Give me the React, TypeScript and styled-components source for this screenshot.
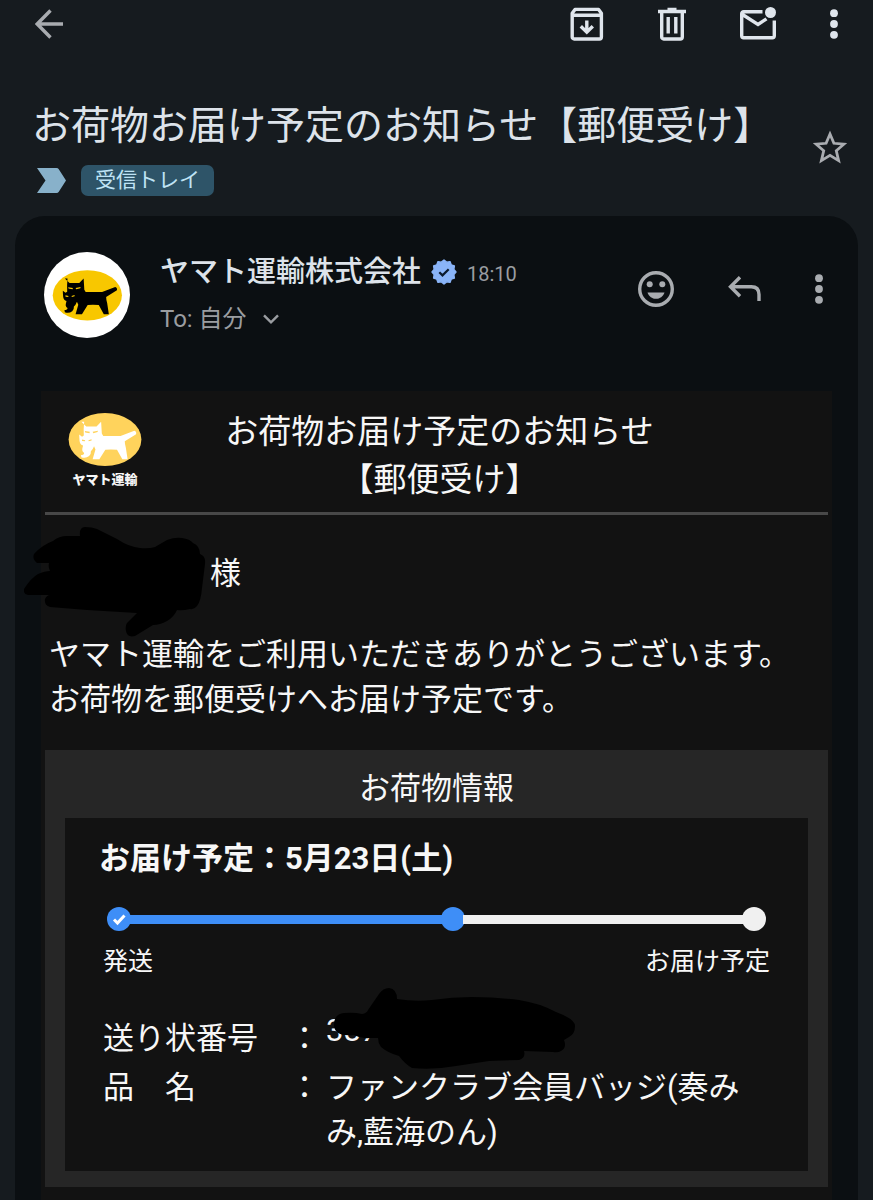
import React, { FC } from 'react'
import styled, { createGlobalStyle } from 'styled-components'

const GlobalStyle = createGlobalStyle`
	* {
		box-sizing: border-box;
	}
	body {
		margin: 0;
		background-color: #161b1f;
		font-family: Roboto, 'Noto Sans CJK JP', sans-serif;
	}
	h1, h2, h3, p {
		margin: 0;
		font-weight: 400;
	}
	svg {
		display: block;
	}
`

const Page = styled.div`
	display: flex;
	flex-direction: column;
	min-height: 100vh;
`

const Toolbar = styled.header`
	display: flex;
	align-items: center;
	justify-content: space-between;
	height: 48px;
	padding: 0 35px;
`

const Actions = styled.div<{ $height: number }>`
	display: flex;
	align-items: center;
	gap: 54px;
	height: ${({ $height }) => $height}px;
`

const IconButton = styled.button<{ $muted?: boolean }>`
	flex: none;
	padding: 0;
	border: 0;
	background: none;
	color: ${({ $muted }) => ($muted ? '#a9acb0' : '#dfe5ec')};
	cursor: pointer;
`

const SubjectRow = styled.section`
	display: flex;
	align-items: center;
	justify-content: space-between;
	padding: 50px 26px 20px 32px;
`

const Subject = styled.h1`
	font-size: 39px;
	line-height: 56px;
	color: #dde3ea;
`

const Labels = styled.div`
	display: flex;
	align-items: center;
	gap: 15px;
	margin-top: 11px;
	padding-left: 5px;
`

const Chip = styled.span`
	padding: 0 14px;
	border-radius: 7px;
	background-color: #2e5468;
	font-size: 21px;
	line-height: 31px;
	color: #bfe3f5;
`

const Card = styled.main`
	display: flex;
	flex: 1;
	flex-direction: column;
	margin: 0 15px;
	padding: 36px 26px 0;
	border-radius: 30px 30px 0 0;
	background-color: #0b0f12;
`

const SenderRow = styled.div`
	display: flex;
	align-items: flex-start;
	margin-bottom: 53px;
	padding: 0 9px 0 3px;
`

const SenderInfo = styled.div`
	flex: 1;
	margin-left: 30px;
`

const SenderLine = styled.div`
	display: flex;
	align-items: center;
	gap: 10px;
	height: 40px;
	margin-bottom: 9px;
`

const Sender = styled.h2`
	font-size: 29px;
	font-weight: 500;
	line-height: 40px;
	color: #dde3ea;
`

const Time = styled.time`
	padding-top: 4px;
	font-size: 20px;
	color: #9a9da1;
`

const Recipient = styled.button`
	display: flex;
	align-items: center;
	gap: 16px;
	padding: 0;
	border: 0;
	background: none;
	font-family: inherit;
	font-size: 24px;
	line-height: 36px;
	color: #9a9da1;
	cursor: pointer;
`

const Mail = styled.article`
	flex: 1;
	padding: 0 4px 10px;
	background-color: #121212;
	color: #f7f7f7;
`

const MailHeader = styled.header`
	display: grid;
	grid-template-columns: 104px 1fr 98px;
	align-items: center;
	padding: 17px 0 8px;
	border-bottom: 3px solid #484848;
`

const Brand = styled.div`
	justify-self: start;
	display: flex;
	flex-direction: column;
	align-items: center;
	padding: 0 0 5px 23px;
	font-size: 13px;
	font-weight: 900;
	line-height: 28px;
`

const MailTitle = styled.h2`
	font-size: 33px;
	line-height: 48px;
	text-align: center;
`

const Addressee = styled.p`
	position: relative;
	padding: 37px 0 0 165px;
	font-size: 31px;
	line-height: 44px;
`

const NameMask = styled.svg`
	position: absolute;
	top: 12px;
	left: -21px;
`

const Message = styled.p`
	padding: 36px 4px 28px;
	font-size: 31px;
	line-height: 45px;
`

const Parcel = styled.section`
	padding: 0 20px 16px;
	background-color: #262626;
`

const ParcelTitle = styled.h3`
	padding: 17px 0 7px;
	font-size: 31px;
	line-height: 44px;
	text-align: center;
`

const ParcelBody = styled.div`
	padding: 19px 34px 16px;
	background-color: #121212;
`

const Schedule = styled.p`
	font-size: 31px;
	font-weight: 700;
	line-height: 44px;
`

const Track = styled.div`
	display: flex;
	align-items: center;
	margin: 26px 8px 0;
`

const Stop = styled.span<{ $done?: boolean }>`
	flex: none;
	width: 24px;
	height: 24px;
	border-radius: 50%;
	background-color: ${({ $done }) => ($done ? '#3e8ef7' : '#f0f0f0')};
`

const Segment = styled.span<{ $done?: boolean; $share: number }>`
	flex: ${({ $share }) => $share};
	height: 9px;
	margin: 0 -2px;
	background-color: ${({ $done }) => ($done ? '#3e8ef7' : '#f0f0f0')};
`

const TrackLabels = styled.div`
	display: flex;
	justify-content: space-between;
	margin: 13px 4px 36px;
	font-size: 25px;
	line-height: 36px;
`

const Details = styled.table`
	width: 100%;
	border-collapse: collapse;
	font-size: 31px;
	line-height: 45px;

	th,
	td {
		padding: 0;
		font-weight: 400;
		text-align: left;
		vertical-align: top;
	}
	th {
		width: 190px;
		padding-left: 4px;
	}
	tr:first-child > * {
		height: 49px;
	}
`

const Colon = styled.td`
	width: 37px;
`

const NumberCell = styled.td`
	position: relative;

	&& {
		line-height: 30px;
	}
`

const NumberMask = styled.svg`
	position: absolute;
	top: -28px;
	left: 4px;
`

const BackIcon: FC = () => (
	<svg width='29' height='30' viewBox='0 0 29 30' fill='none' stroke='currentColor' strokeWidth='3.4'>
		<path d='M28 15H3M15.5 1.5 2.2 15l13.3 13.5' />
	</svg>
)

const ArchiveIcon: FC = () => (
	<svg width='34' height='34' viewBox='0 0 34 34' fill='none' stroke='currentColor' strokeWidth='3.4'>
		<path d='M2.2 6.2 5 2.4h23.6l2.8 3.8V30a2 2 0 0 1-2 2H4.2a2 2 0 0 1-2-2ZM2.2 8.2h29.2' strokeLinejoin='round' />
		<path d='M16.8 13.5v11.5M10.8 19.2l6 6 6-6' />
	</svg>
)

const TrashIcon: FC = () => (
	<svg width='28' height='34' viewBox='0 0 28 34' fill='none' stroke='currentColor' strokeWidth='3.4'>
		<path d='M0 4.5h28M9.5 2.4h9M3.7 4.5V30a2 2 0 0 0 2 2h16.6a2 2 0 0 0 2-2V4.5M10.2 10v16.5M17.8 10v16.5' />
	</svg>
)

const UnreadIcon: FC = () => (
	<svg width='36' height='34' viewBox='0 0 36 34' fill='none' stroke='currentColor' strokeWidth='3.4'>
		<path d='M22.5 4.7H3.7a2 2 0 0 0-2 2v22a2 2 0 0 0 2 2h28.6a2 2 0 0 0 2-2V13.5M2.5 7.5 18 17.5l8.5-5.7' />
		<circle cx='30.5' cy='5.5' r='5.5' fill='currentColor' stroke='none' />
	</svg>
)

const MoreIcon: FC = () => (
	<svg width='8' height='30' viewBox='0 0 8 30' fill='currentColor'>
		<circle cx='4' cy='4.2' r='3.9' />
		<circle cx='4' cy='15' r='3.9' />
		<circle cx='4' cy='25.8' r='3.9' />
	</svg>
)

const StarIcon: FC = () => (
	<svg width='34' height='34' viewBox='0 0 34 34' fill='none' stroke='currentColor' strokeWidth='2.8'>
		<path d='m17 4 3.9 9.3 10 .9-7.6 6.6 2.3 9.8L17 25.4l-8.6 5.2 2.3-9.8-7.6-6.6 10-.9Z' />
	</svg>
)

const ImportantIcon: FC = () => (
	<svg width='29' height='25' viewBox='0 0 29 25' fill='#88b1ca'>
		<path d='M0 0h19.5q1.5 0 2.3 1.2L29 12.5l-7.2 11.3Q21 25 19.5 25H0l8.5-12.5Z' />
	</svg>
)

// twelve-pointed badge
const badgePoints = Array.from({ length: 24 }, (_, i) => {
	const radius = i % 2 ? 10.2 : 12
	const angle = (i * Math.PI) / 12
	return `${13 + radius * Math.sin(angle)},${13 - radius * Math.cos(angle)}`
}).join(' ')

const VerifiedIcon: FC = () => (
	<svg width='26' height='26' viewBox='0 0 26 26'>
		<polygon points={badgePoints} fill='#8ab4f8' stroke='#8ab4f8' strokeWidth='1.4' strokeLinejoin='round' />
		<path d='m8.3 13.2 3.2 3.2 6.2-6.2' fill='none' stroke='#0b1a2e' strokeWidth='2.2' />
	</svg>
)

const ChevronIcon: FC = () => (
	<svg width='16' height='10' viewBox='0 0 16 10' fill='none' stroke='currentColor' strokeWidth='2.4'>
		<path d='m1 1.3 7 7 7-7' />
	</svg>
)

const SmileIcon: FC = () => (
	<svg width='36' height='36' viewBox='0 0 36 36' fill='currentColor'>
		<circle cx='18' cy='18' r='16.3' fill='none' stroke='currentColor' strokeWidth='3.4' />
		<circle cx='11.7' cy='13.2' r='3' />
		<circle cx='24.3' cy='13.2' r='3' />
		<path d='M9.5 21.5h17c-1.5 4-4.5 6.3-8.5 6.3s-7-2.3-8.5-6.3Z' />
	</svg>
)

const ReplyIcon: FC = () => (
	<svg width='33' height='26' viewBox='0 0 33 26' fill='none' stroke='currentColor' strokeWidth='3.4'>
		<path d='M12 1.3 2.5 10.8l9.5 9.5M2.5 10.8h20.8q7.7 0 7.7 7.7V25' />
	</svg>
)

interface CatMarkProps {
	oval: string
	cat: string
}

// black cat carrying a kitten, on the oval
const CatMark: FC<CatMarkProps> = ({ oval, cat }) => (
	<>
		<ellipse cx='141' cy='149' rx='103' ry='75' fill={oval} />
		<path
			d='M74 99l14 13h29l13-13 2 33 4 7h49l39-15q7 2 5 10l-32 20q0 8 3 18l5 33h-15l-15-27q-18-2-33 0l-17 27h-19l8-28-4-9q-4 11-9 14 1 8-5 14-10 8-22 3l-1-6q9 0 9-6-7-4-5-13l2-8q-9-3-10-13-1-12-1-18l8 6 5-3q-1-20 1-39Z'
			fill={cat}
		/>
		<path d='M84 125l14 2-1 4-12-2ZM121 124l-15 3 2 4 12-3ZM76 149l9 2-1 3-8-1ZM103 148l-9 3 1 3 8-2Z' fill={oval} />
	</>
)

const Avatar: FC = () => (
	<svg width='86' height='86' viewBox='12 20 256 256' role='img' aria-label='ヤマト運輸'>
		<circle cx='140' cy='148' r='128' fill='#fff' />
		<CatMark oval='#f8c700' cat='#000' />
	</svg>
)

const App: FC = () => (
	<>
		<GlobalStyle />
		<Page>
			<Toolbar>
				<IconButton $muted aria-label='戻る'>
					<BackIcon />
				</IconButton>
				<Actions $height={48}>
					<IconButton aria-label='アーカイブ'>
						<ArchiveIcon />
					</IconButton>
					<IconButton aria-label='削除'>
						<TrashIcon />
					</IconButton>
					<IconButton aria-label='未読にする'>
						<UnreadIcon />
					</IconButton>
					<IconButton aria-label='その他'>
						<MoreIcon />
					</IconButton>
				</Actions>
			</Toolbar>

			<SubjectRow>
				<div>
					<Subject>お荷物お届け予定のお知らせ【郵便受け】</Subject>
					<Labels>
						<ImportantIcon />
						<Chip>受信トレイ</Chip>
					</Labels>
				</div>
				<IconButton $muted aria-label='スター'>
					<StarIcon />
				</IconButton>
			</SubjectRow>

			<Card>
				<SenderRow>
					<Avatar />
					<SenderInfo>
						<SenderLine>
							<Sender>ヤマト運輸株式会社</Sender>
							<VerifiedIcon />
							<Time>18:10</Time>
						</SenderLine>
						<Recipient>
							To: 自分
							<ChevronIcon />
						</Recipient>
					</SenderInfo>
					<Actions $height={74}>
						<IconButton $muted aria-label='リアクション'>
							<SmileIcon />
						</IconButton>
						<IconButton $muted aria-label='返信'>
							<ReplyIcon />
						</IconButton>
						<IconButton $muted aria-label='メニュー'>
							<MoreIcon />
						</IconButton>
					</Actions>
				</SenderRow>

				<Mail>
					<MailHeader>
						<Brand>
							<svg width='74' height='53' viewBox='38 74 206 150' aria-hidden='true'>
								<CatMark oval='#ffd35c' cat='#fff' />
							</svg>
							ヤマト運輸
						</Brand>
						<MailTitle>
							お荷物お届け予定のお知らせ
							<br />
							【郵便受け】
						</MailTitle>
					</MailHeader>

					<Addressee>
						様
						<NameMask width='182' height='110' viewBox='0 0 182 110'>
							<path d='M56 9Q55 0 61 0q7 0 12 2l20 10q12 8 23 9 9 1 15-1l12-7q8-3 15-2 8 1 11 5 7 3 7 11 6 2 5 10l-3 24q-1 13-5 18-3 4-7 3-8 2-13 1-3 7-10 11-7 4-14 4l-18 11q-8 2-9-5-1-5 1-8l10-10-50-3-37-3q-6-2-5-8 2-4 5-4H4q-5-1-4-6 7-11 14-15 7-3 12-3-2-4-1-8H13q-5-4-3-9 8-9 19-13 6-5 14-5Z' fill='#000' />
						</NameMask>
					</Addressee>

					<Message>
						ヤマト運輸をご利用いただきありがとうございます。
						<br />
						お荷物を郵便受けへお届け予定です。
					</Message>

					<Parcel>
						<ParcelTitle>お荷物情報</ParcelTitle>
						<ParcelBody>
							<Schedule>お届け予定：5月23日(土)</Schedule>
							<Track>
								<Stop $done>
									<svg width='24' height='24' viewBox='0 0 24 24' fill='none' stroke='#fff' strokeWidth='3'>
										<path d='m7 12.5 3.5 3.5 7-7.5' />
									</svg>
								</Stop>
								<Segment $done $share={310} />
								<Stop $done />
								<Segment $share={278} />
								<Stop />
							</Track>
							<TrackLabels>
								<span>発送</span>
								<span>お届け予定</span>
							</TrackLabels>
							<Details>
								<tbody>
									<tr>
										<th scope='row'>送り状番号</th>
										<Colon>：</Colon>
										<NumberCell>
											387
											<NumberMask width='246' height='81' viewBox='0 0 246 81'>
												<path d='M4 37q0-11 10-12 10-1 18 1 5-1 6-4l11-16q4-6 10-6 8 1 8 11 18 3 35 1 20-3 40-3 25 0 47 3 20 3 37 12 19 7 19 14 0 8-6 11l-5 3q3 8-3 11-3 2-8 1l-29-1q2 7-5 9l-30 1-33 5q-22 4-44 2-7-4-13-12-11-3-18-9-3-4-3-9h-9q-8 1-15-3Q4 49 4 37Z' fill='#000' />
											</NumberMask>
										</NumberCell>
									</tr>
									<tr>
										<th scope='row'>品　名</th>
										<Colon>：</Colon>
										<td>ファンクラブ会員バッジ(奏みみ,藍海のん)</td>
									</tr>
								</tbody>
							</Details>
						</ParcelBody>
					</Parcel>
				</Mail>
			</Card>
		</Page>
	</>
)

export default App
